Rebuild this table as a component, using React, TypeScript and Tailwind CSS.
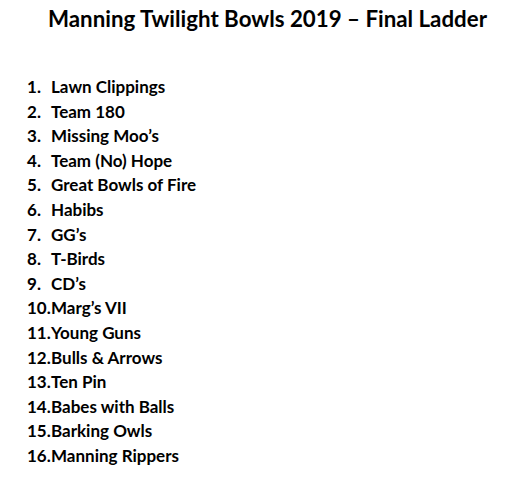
import React from 'react';

const teams = [
  'Lawn Clippings',
  'Team 180',
  'Missing Moo\u2019s',
  'Team (No) Hope',
  'Great Bowls of Fire',
  'Habibs',
  'GG\u2019s',
  'T-Birds',
  'CD\u2019s',
  'Marg\u2019s VII',
  'Young Guns',
  'Bulls & Arrows',
  'Ten Pin',
  'Babes with Balls',
  'Barking Owls',
  'Manning Rippers',
];

export default function App() {
  return (
    <div className="w-[516px] h-[480px] bg-white text-black font-bold" style={{ fontFamily: 'Lato, "Open Sans", sans-serif' }}>
      <h1 className="pt-[6px] pl-[48px] text-[22.3px] leading-[26px] whitespace-nowrap">
        Manning Twilight Bowls 2019 – Final Ladder
      </h1>
      <ol className="mt-[43px] pl-[27px] text-[17px] leading-[24.6px]">
        {teams.map((name, i) => (
          <li key={name} className="flex whitespace-nowrap">
            <span className="min-w-[24px]">{i + 1}.</span>
            <span>{name}</span>
          </li>
        ))}
      </ol>
    </div>
  );
}
